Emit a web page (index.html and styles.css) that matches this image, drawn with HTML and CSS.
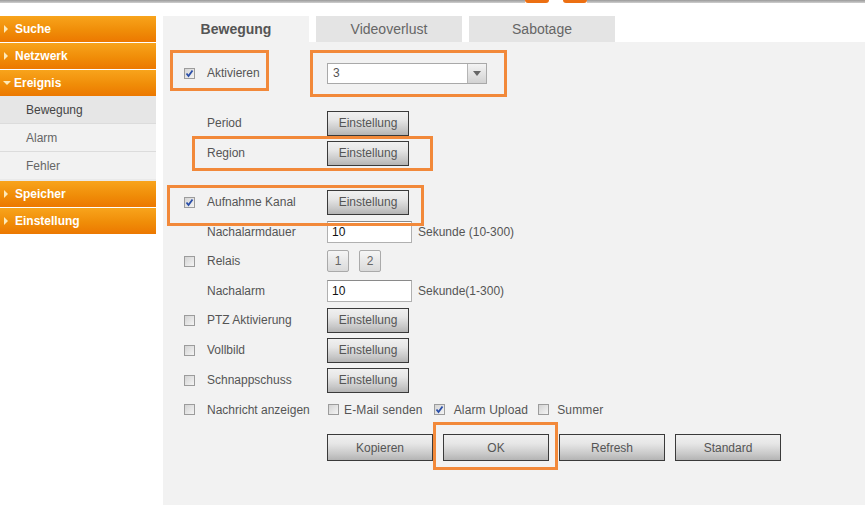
FILE: index.html
```html
<!DOCTYPE html>
<html lang="de">
<head>
<meta charset="utf-8">
<title>Ereignis - Bewegung</title>
<link rel="stylesheet" href="styles.css">
</head>
<body>
<div class="topbar">
  <span class="tb-gray tb-left"></span>
  <span class="tb-orange"></span>
  <span class="tb-white"></span>
  <span class="tb-orange"></span>
  <span class="tb-gray tb-right"></span>
</div>
<div class="layout">
  <nav class="sidebar">
    <div class="nav-head"><span class="arrow-r"></span>Suche</div>
    <div class="nav-head"><span class="arrow-r"></span>Netzwerk</div>
    <div class="nav-head open"><span class="arrow-d"></span>Ereignis</div>
    <div class="nav-sub active">Bewegung</div>
    <div class="nav-sub">Alarm</div>
    <div class="nav-sub last">Fehler</div>
    <div class="nav-head"><span class="arrow-r"></span>Speicher</div>
    <div class="nav-head"><span class="arrow-r"></span>Einstellung</div>
  </nav>
  <main class="main">
    <div class="tabs">
      <div class="tab active">Bewegung</div>
      <div class="tab">Videoverlust</div>
      <div class="tab">Sabotage</div>
    </div>
    <div class="panel">
      <div class="row row-first">
        <span class="cb checked"><svg viewBox="0 0 9 9"><path d="M1.5 4.5 L3.5 7 L7.5 1.5" /></svg></span>
        <span class="label">Aktivieren</span>
        <div class="select"><span class="select-val">3</span><span class="select-btn"><span class="tri"></span></span></div>
      </div>
      <div class="row row-gap">
        <span class="cb-space"></span>
        <span class="label">Period</span>
        <button class="btn">Einstellung</button>
      </div>
      <div class="row">
        <span class="cb-space"></span>
        <span class="label">Region</span>
        <button class="btn">Einstellung</button>
      </div>
      <div class="row row-gap2">
        <span class="cb checked"><svg viewBox="0 0 9 9"><path d="M1.5 4.5 L3.5 7 L7.5 1.5" /></svg></span>
        <span class="label">Aufnahme Kanal</span>
        <button class="btn">Einstellung</button>
      </div>
      <div class="row short">
        <span class="cb-space"></span>
        <span class="label">Nachalarmdauer</span>
        <span class="input">10</span>
        <span class="unit">Sekunde (10-300)</span>
      </div>
      <div class="row">
        <span class="cb"></span>
        <span class="label">Relais</span>
        <button class="btn-small">1</button>
        <button class="btn-small">2</button>
      </div>
      <div class="row short">
        <span class="cb-space"></span>
        <span class="label">Nachalarm</span>
        <span class="input">10</span>
        <span class="unit">Sekunde(1-300)</span>
      </div>
      <div class="row">
        <span class="cb"></span>
        <span class="label">PTZ Aktivierung</span>
        <button class="btn">Einstellung</button>
      </div>
      <div class="row">
        <span class="cb"></span>
        <span class="label">Vollbild</span>
        <button class="btn">Einstellung</button>
      </div>
      <div class="row">
        <span class="cb"></span>
        <span class="label">Schnappschuss</span>
        <button class="btn">Einstellung</button>
      </div>
      <div class="row short">
        <span class="cb"></span>
        <span class="label">Nachricht anzeigen</span>
        <span class="opt opt-mail"><span class="cb"></span>E-Mail senden</span>
        <span class="opt opt-upload"><span class="cb checked"><svg viewBox="0 0 9 9"><path d="M1.5 4.5 L3.5 7 L7.5 1.5" /></svg></span>Alarm Upload</span>
        <span class="opt opt-summer"><span class="cb"></span>Summer</span>
      </div>
      <div class="actions">
        <button class="btn-wide">Kopieren</button>
        <button class="btn-wide">OK</button>
        <button class="btn-wide">Refresh</button>
        <button class="btn-wide">Standard</button>
      </div>

      <div class="hl hl-akt"></div>
      <div class="hl hl-sel"></div>
      <div class="hl hl-region"></div>
      <div class="hl hl-aufn"></div>
      <div class="hl hl-ok"></div>
    </div>
  </main>
</div>
</body>
</html>
```

FILE: styles.css
```css
* { box-sizing: border-box; }
html, body { margin: 0; padding: 0; background: #fff; }
body {
  font-family: "Liberation Sans", Arial, sans-serif;
  font-size: 12px;
  color: #555;
  width: 865px;
  height: 513px;
  overflow: hidden;
}

/* top strip */
.topbar { display: flex; height: 3px; }
.tb-gray { background: linear-gradient(#9a9a9a, #cfcfcf); }
.tb-left { width: 525px; }
.tb-right { flex: 1; }
.tb-orange { width: 24px; background: #ec6f12; border-radius: 0 0 5px 5px; }
.tb-white { width: 14px; background: #fff; }

.layout { display: flex; margin-top: 13px; }

/* sidebar */
.sidebar { width: 156px; flex: none; display: flex; flex-direction: column; }
.nav-head {
  height: 26px;
  margin-bottom: 1px;
  background: linear-gradient(#f8a41c, #f08d08 55%, #ec7800);
  color: #fff;
  font-weight: bold;
  font-size: 12px;
  display: flex;
  align-items: center;
  padding-left: 4px;
}
.nav-head.open { margin-bottom: 0; }
.arrow-r {
  width: 0; height: 0;
  border-left: 4px solid #fde9b8;
  border-top: 4px solid transparent;
  border-bottom: 4px solid transparent;
  margin-right: 7px;
}
.arrow-d {
  width: 0; height: 0;
  border-top: 4px solid #fde9b8;
  border-left: 4px solid transparent;
  border-right: 4px solid transparent;
  margin-right: 3px;
  margin-left: -1px;
}
.nav-sub {
  height: 28px;
  background: #f2f2f2;
  border-bottom: 1px solid #dcdcdc;
  padding-left: 26px;
  display: flex;
  align-items: center;
  color: #666;
}
.nav-sub.active { background: #e6e6e6; color: #444; }
.nav-sub.last { height: 29px; border-bottom: 2px solid #eaeaea; }

/* main */
.main { margin-left: 7px; width: 702px; flex: none; }
.tabs { display: flex; height: 26px; gap: 7px; }
.tab {
  width: 146px;
  background: #e4e4e4;
  color: #666;
  font-size: 14px;
  display: flex;
  align-items: center;
  justify-content: center;
  padding-bottom: 1px;
}
.tab.active { background: #f2f2f2; color: #555; font-weight: bold; }

.panel {
  position: relative;
  background: #f2f2f2;
  height: 463px;
  padding: 16px 0 0 21px;
}

.row { display: flex; align-items: center; height: 30px; }
.row.short { height: 29px; }
.row-gap { margin-top: 20px; }
.row-gap2 { margin-top: 19px; }

.cb, .cb-space { width: 11px; height: 11px; flex: none; margin-right: 12px; }
.cb {
  border: 1px solid #9c9c9c;
  background: linear-gradient(135deg, #d4d4d4, #f4f4f4);
  display: inline-flex;
  align-items: center;
  justify-content: center;
}
.cb svg { width: 9px; height: 9px; }
.cb svg path { fill: none; stroke: #2a4ea8; stroke-width: 1.8; }
.label { width: 120px; flex: none; color: #555; }

.select {
  width: 160px;
  height: 21px;
  border: 1px solid #a9a9a9;
  background: #fff;
  display: flex;
  align-items: stretch;
}
.select-val { flex: 1; padding-left: 5px; display: flex; align-items: center; color: #555; }
.select-btn {
  width: 19px;
  border-left: 1px solid #b5b5b5;
  background: linear-gradient(#f4f4f4, #d2d2d2);
  display: flex;
  align-items: center;
  justify-content: center;
}
.tri {
  width: 0; height: 0;
  border-top: 5px solid #666;
  border-left: 4px solid transparent;
  border-right: 4px solid transparent;
}

.btn, .btn-wide {
  font-family: "Liberation Sans", Arial, sans-serif;
  font-size: 12px;
  color: #555;
  border: 1px solid #3a3a3a;
  background: linear-gradient(#f0f0f0, #e6e6e6 35%, #c9c9c9 75%, #b4b4b4);
  padding: 0;
  margin: 0;
}
.btn { width: 82px; height: 25px; }
.btn-wide { width: 106px; height: 27px; }

.btn-small {
  font-family: "Liberation Sans", Arial, sans-serif;
  font-size: 12px;
  color: #666;
  width: 22px;
  height: 22px;
  padding: 0;
  margin: 0 10px 0 0;
  border: 1px solid #aaa;
  border-radius: 2px;
  background: linear-gradient(#f6f6f6, #dadada);
}

.input {
  width: 85px;
  height: 22px;
  background: #fff;
  border: 1px solid #b0b0b0;
  border-top-color: #8a8a8a;
  color: #111;
  display: flex;
  align-items: center;
  padding-left: 4px;
}
.unit { margin-left: 6px; color: #555; }

.opt { display: flex; align-items: center; color: #555; letter-spacing: 0.15px; }
.opt-mail .cb { margin: 0 5px 0 1px; }
.opt-upload { margin-left: 11px; }
.opt-upload .cb { margin: 0 9px 0 0; }
.opt-summer { margin-left: 10px; }
.opt-summer .cb { margin: 0 8px 0 0; }

.actions { display: flex; gap: 10px; margin-top: 10px; padding-left: 143px; }

/* highlight overlays */
.hl { position: absolute; border: 3px solid #f2893a; }
.hl-akt { left: 7px; top: 8px; width: 99px; height: 41px; }
.hl-sel { left: 147px; top: 8px; width: 197px; height: 47px; }
.hl-region { left: 29px; top: 94px; width: 241px; height: 35px; }
.hl-aufn { left: 4px; top: 143px; width: 257px; height: 41px; }
.hl-ok { left: 270px; top: 380px; width: 125px; height: 48px; }
```
